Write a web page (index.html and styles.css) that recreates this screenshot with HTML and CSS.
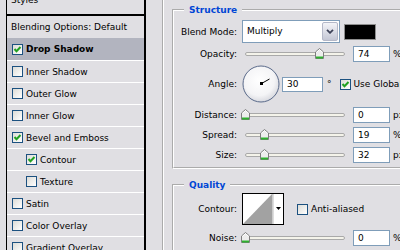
FILE: index.html
```html
<!DOCTYPE html>
<html lang="en">
<head>
  <meta charset="UTF-8" />
  <meta name="viewport" content="width=device-width, initial-scale=1.0"/>
  <title>Layer Style</title>
  <link rel="stylesheet" href="styles.css">
</head>
<body>

  <div class="dialog">

    <!-- effects list -->
    <ul class="fx-list">
      <li class="fx fx-head fx-title">Styles</li>
      <li class="fx fx-head">Blending Options: Default</li>
      <li class="fx selected"><span class="box"><svg width="9" height="9" viewBox="0 0 9 9"><path d="M1.5 4 L3.5 6.2 L7.5 2" fill="none" stroke="#21a121" stroke-width="2"/></svg></span><b>Drop Shadow</b></li>
      <li class="fx"><span class="box"></span>Inner Shadow</li>
      <li class="fx"><span class="box"></span>Outer Glow</li>
      <li class="fx"><span class="box"></span>Inner Glow</li>
      <li class="fx"><span class="box"><svg width="9" height="9" viewBox="0 0 9 9"><path d="M1.5 4 L3.5 6.2 L7.5 2" fill="none" stroke="#21a121" stroke-width="2"/></svg></span>Bevel and Emboss</li>
      <li class="fx fx-sub"><span class="box"><svg width="9" height="9" viewBox="0 0 9 9"><path d="M1.5 4 L3.5 6.2 L7.5 2" fill="none" stroke="#21a121" stroke-width="2"/></svg></span>Contour</li>
      <li class="fx fx-sub"><span class="box"></span>Texture</li>
      <li class="fx"><span class="box"></span>Satin</li>
      <li class="fx"><span class="box"></span>Color Overlay</li>
      <li class="fx"><span class="box"></span>Gradient Overlay</li>
    </ul>

    <!-- effect options -->
    <div class="options">
      <fieldset class="group group-outer">
        <legend>Drop Shadow</legend>

        <fieldset class="group group-structure">
          <legend>Structure</legend>

          <div class="row row-blend">
            <span class="label">Blend Mode:</span>
            <div class="select">
              <span class="select-value">Multiply</span>
              <span class="select-btn"><svg width="8" height="5" viewBox="0 0 8 5"><path d="M1 0.8 L4 3.8 L7 0.8" fill="none" stroke="#3d4258" stroke-width="1.8"/></svg></span>
            </div>
            <span class="swatch"></span>
          </div>

          <div class="row row-tight">
            <span class="label">Opacity:</span>
            <div class="slider"><div class="rail"><div class="track"></div>
              <svg class="thumb" style="left: 74%" width="9" height="11" viewBox="0 0 9 11"><path d="M0.5 4 L4.5 0.5 L8.5 4 V10.5 H0.5 Z" fill="#ededed" stroke="#7d7d7d"/><path d="M1.5 4.3 L4.5 1.6 L7.5 4.3" fill="none" stroke="#fff"/><path d="M1 9.5 H8" stroke="#2fb02f" stroke-width="2"/></svg>
            </div></div>
            <span class="field">74</span>
            <span class="unit">%</span>
          </div>

          <div class="row row-angle">
            <span class="label">Angle:</span>
            <svg class="dial" width="38" height="38" viewBox="0 0 38 38">
              <defs>
                <radialGradient id="dialFill" cx="45%" cy="40%" r="60%">
                  <stop offset="0" stop-color="#ffffff"/>
                  <stop offset="0.7" stop-color="#f4f4f6"/>
                  <stop offset="1" stop-color="#d9dae0"/>
                </radialGradient>
              </defs>
              <circle cx="19" cy="19" r="18" fill="url(#dialFill)" stroke="#5a6a8a"/>
              <path d="M19.5 18.5 L27.5 14" stroke="#000" stroke-width="1"/>
              <rect x="18" y="17" width="3" height="3" fill="#000"/>
            </svg>
            <span class="field field-angle">30</span>
            <span class="deg">°</span>
            <span class="check"><span class="box"><svg width="9" height="9" viewBox="0 0 9 9"><path d="M1.5 4 L3.5 6.2 L7.5 2" fill="none" stroke="#21a121" stroke-width="2"/></svg></span>Use Global Light</span>
          </div>

          <div class="row">
            <span class="label">Distance:</span>
            <div class="slider"><div class="rail"><div class="track"></div>
              <svg class="thumb" style="left: 0%" width="9" height="11" viewBox="0 0 9 11"><path d="M0.5 4 L4.5 0.5 L8.5 4 V10.5 H0.5 Z" fill="#ededed" stroke="#7d7d7d"/><path d="M1.5 4.3 L4.5 1.6 L7.5 4.3" fill="none" stroke="#fff"/><path d="M1 9.5 H8" stroke="#2fb02f" stroke-width="2"/></svg>
            </div></div>
            <span class="field">0</span>
            <span class="unit">px</span>
          </div>

          <div class="row">
            <span class="label">Spread:</span>
            <div class="slider"><div class="rail"><div class="track"></div>
              <svg class="thumb" style="left: 19%" width="9" height="11" viewBox="0 0 9 11"><path d="M0.5 4 L4.5 0.5 L8.5 4 V10.5 H0.5 Z" fill="#ededed" stroke="#7d7d7d"/><path d="M1.5 4.3 L4.5 1.6 L7.5 4.3" fill="none" stroke="#fff"/><path d="M1 9.5 H8" stroke="#2fb02f" stroke-width="2"/></svg>
            </div></div>
            <span class="field">19</span>
            <span class="unit">%</span>
          </div>

          <div class="row">
            <span class="label">Size:</span>
            <div class="slider"><div class="rail"><div class="track"></div>
              <svg class="thumb" style="left: 18.5%" width="9" height="11" viewBox="0 0 9 11"><path d="M0.5 4 L4.5 0.5 L8.5 4 V10.5 H0.5 Z" fill="#ededed" stroke="#7d7d7d"/><path d="M1.5 4.3 L4.5 1.6 L7.5 4.3" fill="none" stroke="#fff"/><path d="M1 9.5 H8" stroke="#2fb02f" stroke-width="2"/></svg>
            </div></div>
            <span class="field">32</span>
            <span class="unit">px</span>
          </div>
        </fieldset>

        <fieldset class="group group-quality">
          <legend>Quality</legend>

          <div class="row row-contour">
            <span class="label">Contour:</span>
            <div class="contour">
              <svg width="29" height="30" viewBox="0 0 29 30"><path d="M0 30 L29 0 V30 Z" fill="#a2a2a2"/></svg>
              <span class="contour-strip"></span>
              <span class="contour-btn"><svg width="5" height="3" viewBox="0 0 5 3"><path d="M0 0 H5 L2.5 3 Z" fill="#000"/></svg></span>
            </div>
            <span class="check check-aa"><span class="box"></span>Anti-aliased</span>
          </div>

          <div class="row row-noise">
            <span class="label">Noise:</span>
            <div class="slider"><div class="rail"><div class="track"></div>
              <svg class="thumb" style="left: 0%" width="9" height="11" viewBox="0 0 9 11"><path d="M0.5 4 L4.5 0.5 L8.5 4 V10.5 H0.5 Z" fill="#ededed" stroke="#7d7d7d"/><path d="M1.5 4.3 L4.5 1.6 L7.5 4.3" fill="none" stroke="#fff"/><path d="M1 9.5 H8" stroke="#2fb02f" stroke-width="2"/></svg>
            </div></div>
            <span class="field">0</span>
            <span class="unit">%</span>
          </div>
        </fieldset>
      </fieldset>
    </div>

  </div>

</body>
</html>
```

FILE: styles.css
```css
body {
  margin: 0;
  background: #e0dfe3;
  color: #000;
  font-family: "DejaVu Sans", Verdana, sans-serif;
  font-size: 9px;
  overflow: hidden;
}
.dialog {
  display: flex;
  width: 400px;
  height: 250px;
  overflow: hidden;
}

/* effects list */
.fx-list {
  flex: none;
  list-style: none;
  width: 137px;
  height: 280px;
  margin: -7px 0 0 6px;
  padding: 0;
  border-left: 1px solid #000;
  border-right: 2px solid #000;
}
.fx {
  display: flex;
  align-items: center;
  height: 21px;
  padding-left: 5px;
  border-bottom: 1px solid #fff;
  white-space: nowrap;
}
.fx-head {
  padding-left: 4px;
}
.fx-title {
  line-height: 14px;
  align-items: flex-start;
  border-bottom: 2px solid #000;
}
.fx-head + .fx-head {
  height: 22px;
  border-bottom: none;
}
.fx.selected {
  height: 22px;
  background: #b2b4bf;
}
.fx-sub {
  padding-left: 19px;
}
.box {
  flex: none;
  display: flex;
  align-items: center;
  justify-content: center;
  width: 11px;
  height: 11px;
  box-sizing: border-box;
  margin-right: 3px;
  border: 1px solid #1c5180;
  background: linear-gradient(135deg, #dcdcd7, #ffffff);
}

/* options */
.options {
  flex: none;
  width: 320px;
  padding-left: 16px;
}
.group {
  margin: 0;
  padding: 0;
  min-width: 0;
  border: 2px groove #fff;
}
.group legend {
  margin-left: 10px;
  padding: 0 5px;
  line-height: 12px;
  color: #0046d5;
  font-weight: bold;
}
.group-outer {
  margin-top: -13px;
  padding: 5px 0 0 8px;
  height: 300px;
  border-right: none;
  border-bottom: none;
}
.group-outer > legend {
  margin-left: 0;
  padding: 0 1px;
}
.group-structure {
  padding: 4px 0 4px;
}
.group-quality {
  margin-top: 10px;
  padding: 2px 0 0;
  height: 100px;
  border-bottom: none;
}

.row {
  display: flex;
  align-items: center;
  height: 16px;
  margin-top: 4px;
  white-space: nowrap;
}
.row-blend {
  height: 23px;
  margin-top: 0;
}
.row-tight {
  margin-top: 3px;
}
.row-angle {
  height: 38px;
  margin-top: 3px;
}
.row-contour {
  height: 32px;
  margin-top: 0;
}
.row-noise {
  margin-top: 5px;
}
.label {
  flex: none;
  width: 63px;
  margin-right: 5px;
  text-align: right;
}

.select {
  flex: none;
  display: flex;
  width: 98px;
  height: 23px;
  box-sizing: border-box;
  padding: 1px;
  border: 1px solid #7f9db9;
  background: #fff;
}
.select-value {
  flex: 1;
  padding-left: 3px;
  line-height: 19px;
}
.select-btn {
  display: flex;
  align-items: center;
  justify-content: center;
  width: 16px;
  box-sizing: border-box;
  border: 1px solid #b4b8c8;
  border-radius: 2px;
  background: linear-gradient(#f3f4f8, #c4c7d5);
}
.swatch {
  flex: none;
  width: 32px;
  height: 16px;
  box-sizing: border-box;
  margin-left: 4px;
  border: 1px solid #8e8e8e;
  background: #000;
}

.slider {
  flex: none;
  width: 105px;
  height: 16px;
}
.rail {
  position: relative;
  height: 16px;
  margin: 0 2px 0 3px;
}
.track {
  position: relative;
  top: 6px;
  height: 2px;
  border: 1px solid #a9a9a9;
  border-radius: 2px;
  background: #f4f3ea;
}
.thumb {
  position: absolute;
  top: 2px;
  margin-left: -4px;
}

.field {
  flex: none;
  width: 37px;
  height: 16px;
  box-sizing: border-box;
  margin-left: 6px;
  padding-left: 4px;
  border: 1px solid #7f9db9;
  background: #fff;
  line-height: 14px;
}
.field-angle {
  width: 41px;
  height: 15px;
  margin-left: 2px;
  line-height: 13px;
}
.unit {
  margin-left: 3px;
}
.deg {
  margin-left: 4px;
}
.dial {
  flex: none;
}
.check {
  display: flex;
  align-items: center;
  margin-left: 8px;
}
.check-aa {
  margin-left: 13px;
}

.contour {
  flex: none;
  display: flex;
  width: 42px;
  height: 32px;
  box-sizing: border-box;
  border: 1px solid #000;
  background: #fff;
}
.contour-strip {
  width: 2px;
  background: linear-gradient(90deg, #c4c4c4, #e6e6e6);
}
.contour-btn {
  flex: 1;
  display: flex;
  align-items: center;
  justify-content: center;
  padding-bottom: 2px;
}
```
